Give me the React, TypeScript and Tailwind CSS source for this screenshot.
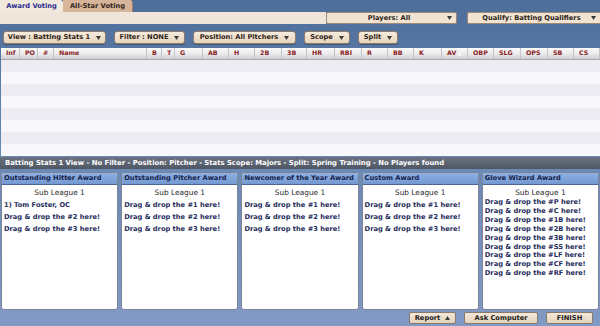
import React from 'react';

const FONT = { fontFamily: '"DejaVu Sans", Verdana, sans-serif' };

function Caret({ up = false }: { up?: boolean }) {
  return (
    <svg width="5" height="4" viewBox="0 0 5 4" className="shrink-0">
      {up ? <path d="M0 4 L2.5 0 L5 4 Z" fill="#3a3a3a" /> : <path d="M0 0 L5 0 L2.5 4 Z" fill="#3a3a3a" />}
    </svg>
  );
}

const columns: [string, number][] = [
  ['Inf', 19], ['PO', 18], ['#', 16], ['Name', 93], ['B', 15], ['T', 13], ['G', 28],
  ['AB', 26], ['H', 26], ['2B', 27], ['3B', 25], ['HR', 28], ['RBI', 27], ['R', 26],
  ['BB', 26], ['K', 28], ['AV', 26], ['OBP', 26], ['SLG', 27], ['OPS', 27], ['SB', 26], ['CS', 26],
];

function ToolButton({ label, width }: { label: string; width: string }) {
  return (
    <div
      className={`${width} h-[13px] flex items-center justify-center gap-[6px] rounded-[3px] border border-[#8d7c6a] bg-gradient-to-b from-[#f6ebdc] to-[#e6d4bd] shadow-[0_1px_0_rgba(0,0,0,0.25)]`}
    >
      <span className="text-[6.7px] font-bold text-[#2e2418] leading-none">{label}</span>
      <Caret />
    </div>
  );
}

function AwardPanel({ title, lines, glove = false }: { title: string; lines: string[]; glove?: boolean }) {
  return (
    <div className="flex flex-col rounded-[3px] border border-[#7d8494] bg-white overflow-hidden">
      <div className="h-[12px] flex items-center px-[2px] bg-gradient-to-b from-[#8eb0e2] to-[#7499d2] border-b border-[#4d6794]">
        <span className="text-[6.7px] font-bold text-[#16224a] leading-none whitespace-nowrap">{title}</span>
      </div>
      <div className="flex-1 px-[2px] pt-[2px]">
        <div className={`text-center text-[7.4px] text-[#2c2c2c] ${glove ? 'leading-[11px]' : 'leading-[12px]'}`}>Sub League 1</div>
        {lines.map((l) => (
          <div
            key={l}
            className={`text-[6.7px] font-bold text-[#1f2d5c] whitespace-nowrap ${glove ? 'leading-[8.9px]' : 'leading-[12px]'}`}
          >
            {l}
          </div>
        ))}
      </div>
    </div>
  );
}

export default function App() {
  const std = ['Drag & drop the #1 here!', 'Drag & drop the #2 here!', 'Drag & drop the #3 here!'];
  const glove = ['P', 'C', '1B', '2B', '3B', 'SS', 'LF', 'CF', 'RF'].map((p) => `Drag & drop the #${p} here!`);

  return (
    <div
      style={FONT}
      className="w-[600px] h-[326px] flex flex-col overflow-hidden bg-gradient-to-b from-[#4d6d9a] via-[#6b89b5] to-[#819ac4]"
    >
      {/* Tabs */}
      <div className="h-[12px] flex items-end">
        <div className="w-[63px] h-[12px] flex items-center justify-center bg-[#f1e8de] rounded-tr-[3px]">
          <span className="text-[6.7px] font-bold text-[#2b2f8c] leading-none">Award Voting</span>
        </div>
        <div className="w-[70px] h-[12px] flex items-center justify-center bg-[#d6b59b] rounded-tr-[3px] border-r border-[#9c7e66]">
          <span className="text-[6.7px] font-bold text-[#35241a] leading-none">All-Star Voting</span>
        </div>
      </div>

      {/* Strip with dropdowns */}
      <div className="h-[12px] flex items-stretch">
        <div className="w-[326px] bg-[#efe5da]" />
        <div className="w-[131px] flex items-center rounded-[2px] border border-[#9d8875] bg-[#f0e3d2] px-[4px]">
          <span className="flex-1 text-center text-[6.7px] font-bold text-[#2b2418] leading-none">Players: All</span>
          <Caret />
        </div>
        <div className="w-[10px]" />
        <div className="flex-1 flex items-center rounded-l-[2px] border border-r-0 border-[#9d8875] bg-[#f0e3d2] px-[4px]">
          <span className="flex-1 text-center text-[6.7px] font-bold text-[#2b2418] leading-none">Qualify: Batting Qualifiers</span>
          <Caret />
        </div>
      </div>

      {/* Toolbar */}
      <div className="h-[24px] flex items-start pt-[7px] pl-[3px] gap-[8px]">
        <ToolButton label="View : Batting Stats 1" width="w-[103px]" />
        <ToolButton label="Filter : NONE" width="w-[71px]" />
        <ToolButton label="Position: All Pitchers" width="w-[103px]" />
        <ToolButton label="Scope" width="w-[46px]" />
        <ToolButton label="Split" width="w-[40px]" />
      </div>

      {/* Table */}
      <div className="pl-[1px]">
        <div className="h-[12px] flex bg-gradient-to-b from-[#fbfbfb] via-[#ececee] to-[#cfd0d4] border-b border-[#a9abb2]">
          {columns.map(([name, w]) => (
            <div
              key={name}
              style={{ width: w }}
              className="shrink-0 flex items-center pl-[5px] border-r border-[#c3c4ca] text-[6.3px] font-bold text-[#8b2222] leading-none"
            >
              {name}
              {name === 'AV' && <span className="ml-[2px] text-[4px] text-white">▲</span>}
            </div>
          ))}
        </div>
        {Array.from({ length: 8 }).map((_, i) => (
          <div key={i} className={`h-[12px] ${i % 2 === 0 ? 'bg-[#ececf2]' : 'bg-[#f8f8fc]'}`} />
        ))}
      </div>

      {/* Status bar */}
      <div className="mt-[1px] h-[12px] flex items-center px-[5px] bg-gradient-to-b from-[#6a7280] to-[#505764]">
        <span className="text-[6.85px] font-bold text-white leading-none whitespace-nowrap">
          Batting Stats 1 View - No Filter - Position: Pitcher - Stats Scope: Majors - Split: Spring Training - No Players found
        </span>
      </div>

      {/* Award panels */}
      <div className="mt-[3px] h-[138px] grid grid-cols-5 gap-[3px] px-[1px]">
        <AwardPanel title="Outstanding Hitter Award" lines={['1) Tom Foster, OC', std[1], std[2]]} />
        <AwardPanel title="Outstanding Pitcher Award" lines={std} />
        <AwardPanel title="Newcomer of the Year Award" lines={std} />
        <AwardPanel title="Custom Award" lines={std} />
        <AwardPanel title="Glove Wizard Award" lines={glove} glove />
      </div>

      {/* Bottom buttons */}
      <div className="flex-1 flex items-center justify-end gap-[8px] pr-[7px]">
        <div className="w-[47px] h-[12px] flex items-center justify-center gap-[5px] rounded-[2px] border border-[#8a7a6a] bg-gradient-to-b from-[#f4e8da] to-[#e4d2bc]">
          <span className="text-[6.7px] font-bold text-[#1c1c1c] leading-none">Report</span>
          <Caret up />
        </div>
        <div className="w-[74px] h-[12px] flex items-center justify-center rounded-[2px] border border-[#8a7a6a] bg-gradient-to-b from-[#f4e8da] to-[#e4d2bc]">
          <span className="text-[6.7px] font-bold text-[#1c1c1c] leading-none">Ask Computer</span>
        </div>
        <div className="w-[47px] h-[12px] flex items-center justify-center rounded-[2px] border border-[#8a7a6a] bg-gradient-to-b from-[#f4e8da] to-[#e4d2bc]">
          <span className="text-[6.7px] font-bold text-[#1c1c1c] leading-none">FINISH</span>
        </div>
      </div>
    </div>
  );
}
